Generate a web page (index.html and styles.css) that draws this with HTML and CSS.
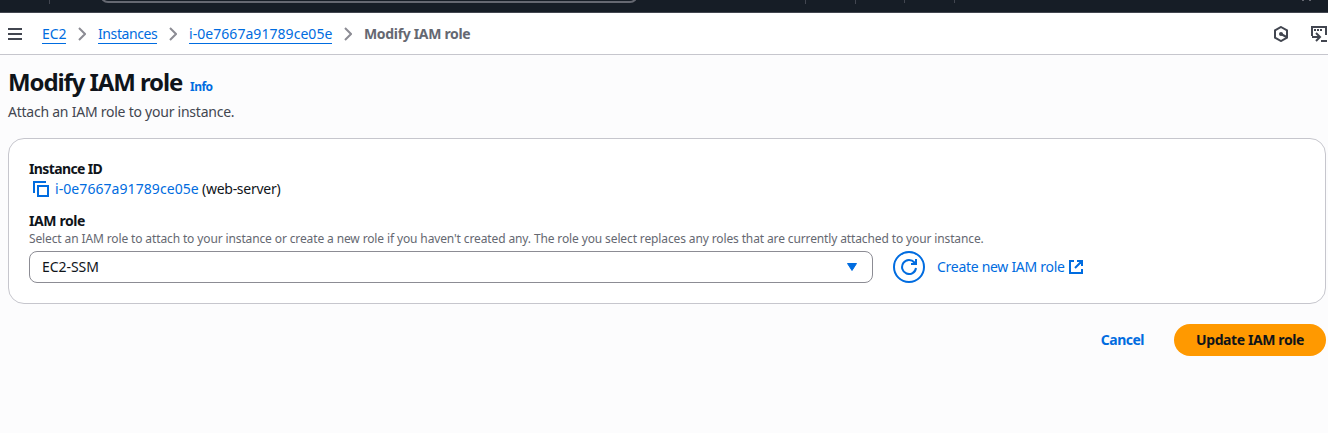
FILE: index.html
```html
<!DOCTYPE html>
<html lang="en">
<head>
<meta charset="utf-8">
<title>Modify IAM role</title>
<link rel="stylesheet" href="styles.css">
</head>
<body>
<header class="global-nav">
  <span class="nav-divider first"></span>
  <span class="search-box"></span>
  <span class="nav-divider d2"></span>
  <span class="nav-divider d3"></span>
  <span class="nav-divider short d4"></span>
  <span class="nav-divider short d5"></span>
  <span class="nav-mark"></span>
</header>
<nav class="crumb-bar">
  <svg class="menu-icon" width="14" height="12" viewBox="0 0 14 12"><path d="M0 1h14M0 6h14M0 11h14"/></svg>
  <a class="crumb c-ec2">EC2</a>
  <svg class="chevron" width="8" height="14" viewBox="0 0 8 14"><path d="M1 1l6 6-6 6"/></svg>
  <a class="crumb c-instances">Instances</a>
  <svg class="chevron" width="8" height="14" viewBox="0 0 8 14"><path d="M1 1l6 6-6 6"/></svg>
  <a class="crumb c-id">i-0e7667a91789ce05e</a>
  <svg class="chevron" width="8" height="14" viewBox="0 0 8 14"><path d="M1 1l6 6-6 6"/></svg>
  <span class="crumb-current">Modify IAM role</span>
  <svg class="hex-icon" width="16" height="16" viewBox="0 0 16 16"><path d="M8 1l6 3.400v7.200L8 15l-6-3.400V4.400z"/><path d="M8 8l5.500 3"/><circle cx="8" cy="8" r="2"/></svg>
  <svg class="shell-icon" width="16" height="16" viewBox="0 0 16 16"><path d="M1 10V1h14v8M10 15h6"/><path class="dots" d="M3 4h8"/><path d="M1 11h7M5 7l4 4-4 4"/></svg>
</nav>
<main class="page">
  <div class="title-row"><h1 class="title">Modify IAM role</h1><a class="info">Info</a></div>
  <p class="description">Attach an IAM role to your instance.</p>
  <section class="card">
    <div class="label label-instance">Instance ID</div>
    <div class="instance-row">
      <svg class="copy-icon" width="16" height="16" viewBox="0 0 16 16"><path d="M1 12V1h12"/><path d="M5 5h10v10H5z"/></svg>
      <a class="instance-link">i-0e7667a91789ce05e</a>
      <span class="instance-name">(web-server)</span>
    </div>
    <div class="label label-role">IAM role</div>
    <p class="hint">Select an IAM role to attach to your instance or create a new role if you haven't created any. The role you select replaces any roles that are currently attached to your instance.</p>
    <div class="role-row">
      <div class="select"><span class="select-value">EC2-SSM</span><svg class="caret" width="10" height="8" viewBox="0 0 10 8"><path d="M.5.5h9L5 7.500z"/></svg></div>
      <button class="refresh" aria-label="Refresh"><svg width="16" height="16" viewBox="0 0 16 16"><path d="M15 9a7 7 0 1 1-1.600-5.500L15 5"/><path d="M15 0v5H10"/></svg></button>
      <a class="create-link">Create new IAM role</a>
      <svg class="external-icon" width="14" height="14" viewBox="0 0 14 14"><path d="M5 1H1v12h12V9M8 1h5v5M13 1L6 8"/></svg>
    </div>
  </section>
  <div class="actions"><button class="cancel">Cancel</button><button class="submit">Update IAM role</button></div>
</main>
</body>
</html>
```
FILE: styles.css
```css
* { box-sizing: border-box; }
body { margin: 0; height: 433px; overflow: hidden; background: #fcfcfd; font: 14px/20px "Noto Sans", "Open Sans", sans-serif; color: #0f141a; }
h1, p { margin: 0; }
svg { display: block; flex: none; fill: none; stroke: #424650; stroke-width: 2; }
a { color: #006ce0; white-space: nowrap; }
button { padding: 0; border: 0; background: none; font: inherit; font-weight: 700; }

.global-nav { position: relative; height: 13px; background: #161d26; border-bottom: 1px solid #424650; overflow: hidden; }
.nav-divider { position: absolute; top: 0; width: 1px; height: 4px; background: #424650; }
.nav-divider.short { height: 3px; }
.first { left: 49px; }
.d2 { left: 805px; }
.d3 { left: 855px; }
.d4 { left: 904px; }
.d5 { left: 954px; }
.nav-mark { position: absolute; left: 1302px; top: 0; width: 9px; height: 1px; border: solid #656871; border-width: 0 2px; }
.search-box { position: absolute; left: 100px; top: -29px; width: 538px; height: 32px; border: 2px solid #656871; border-radius: 8px; }

.crumb-bar { display: flex; align-items: center; height: 42px; padding-left: 8px; background: #fff; border-bottom: 1px solid #c6c6cd; overflow: hidden; }
.crumb { height: 20px; border-bottom: 1px solid #006ce0; line-height: 19px; }
.menu-icon { margin-right: 20px; }
.chevron { margin: 0 12px; stroke: #8c8c94; }
.c-ec2 { width: 24px; letter-spacing: -.1px; }
.c-instances { width: 59px; letter-spacing: -.4px; }
.c-id { width: 143px; letter-spacing: .05px; }
.instance-link { width: 144px; letter-spacing: .07px; }
.crumb-current { font-weight: 700; color: #656871; letter-spacing: -.33px; }
.hex-icon { margin-left: auto; }
.hex-icon circle { fill: #424650; stroke: none; }
.shell-icon { margin: 0 1px 0 22px; }
.dots { stroke-dasharray: 2 1; }

.page { padding: 12px 2px 0 8px; }
.title-row { display: flex; align-items: baseline; height: 30px; }
.title { width: 174px; white-space: nowrap; font-size: 24px; line-height: 30px; font-weight: 700; letter-spacing: -1.1px; }
.info { margin-left: 8px; font-size: 12px; font-weight: 700; letter-spacing: -.5px; }
.description { margin-top: 5px; color: #424650; letter-spacing: -.24px; }
.card { height: 166px; margin-top: 16px; padding: 20px; background: #fff; border: 1px solid #c6c6cd; border-radius: 16px; }
.label { font-weight: 700; letter-spacing: -.4px; }
.label-instance { letter-spacing: -.62px; }
.instance-row { display: flex; align-items: center; height: 20px; }
.copy-icon { margin: 0 6px 0 4px; stroke: #006ce0; }
.instance-name { margin-left: 3px; letter-spacing: -.27px; }
.label-role { margin-top: 12px; }
.hint { height: 20px; font-size: 12px; line-height: 16px; color: #656871; white-space: nowrap; letter-spacing: -.125px; }
.role-row { display: flex; align-items: center; height: 32px; }
.select { display: flex; align-items: center; justify-content: space-between; width: 844px; height: 32px; padding: 0 15px 0 12px; border: 1px solid #8c8c94; border-radius: 8px; }
.select-value { letter-spacing: -.05px; }
.caret { fill: #006ce0; stroke: #006ce0; stroke-width: 1; }
.refresh { display: grid; place-items: center; width: 32px; height: 32px; margin: 0 12px 0 20px; border: 2px solid #006ce0; border-radius: 50%; }
.refresh svg, .external-icon { stroke: #006ce0; }
.create-link { width: 127px; letter-spacing: -.29px; }
.external-icon { margin-left: 5px; }
.actions { display: flex; justify-content: flex-end; align-items: center; height: 32px; margin-top: 20px; }
.cancel { margin-right: 30px; color: #006ce0; letter-spacing: -.5px; }
.submit { width: 152px; height: 32px; border-radius: 16px; background: #ff9900; color: #0f141a; letter-spacing: -.4px; }
```
